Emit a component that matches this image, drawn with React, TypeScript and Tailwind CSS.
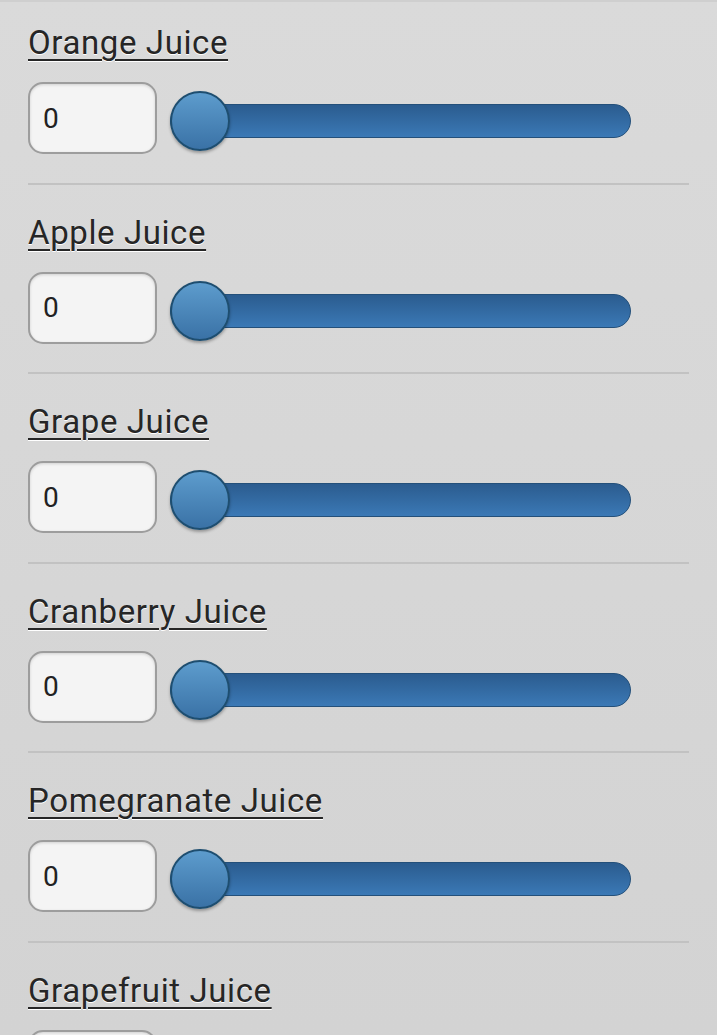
import { useState } from 'react';

const juices = [
  'Orange Juice',
  'Apple Juice',
  'Grape Juice',
  'Cranberry Juice',
  'Pomegranate Juice',
  'Grapefruit Juice',
];

const JuiceSlider = ({ label }: { label: string }) => {
  const [value, setValue] = useState(0);

  return (
    <div className="pt-[29px] pb-[28.5px] border-b-2 border-[#c2c2c2] first:pt-[22px]">
      <label className="block text-[33px] leading-[38px] tracking-[0.6px] text-[#262626] underline underline-offset-[5px] decoration-[2px] [text-shadow:0_1px_0_#fff]">
        {label}
      </label>
      <div className="mt-[20px] flex items-center">
        <input
          type="text"
          value={value}
          onChange={(e) => setValue(Number(e.target.value) || 0)}
          className="w-[129px] h-[72px] rounded-[15px] border-2 border-[#9d9d9d] bg-[#f4f4f4] px-[13px] text-[28px] text-[#222] shadow-[inset_0_1px_3px_rgba(0,0,0,0.15)] outline-none"
        />
        <div className="relative ml-[13px] mt-[6px] w-[461px] h-[62px] flex items-center">
          <div className="w-full h-[34px] rounded-full border border-[#24507a] bg-gradient-to-b from-[#2b5c8f] to-[#3b79b6]" />
          <div className="absolute left-0 top-[1px] w-[60px] h-[60px] rounded-full border-2 border-[#1e4e70] bg-gradient-to-b from-[#5d9ccd] to-[#3a72a6] shadow-[0_2px_3px_rgba(0,0,0,0.3)]" />
        </div>
      </div>
    </div>
  );
};

export default function App() {
  return (
    <div className="h-[1035px] overflow-hidden border-t-2 border-[#cfcfcf] bg-gradient-to-b from-[#dadada] to-[#d3d3d3] px-[28px] font-['Roboto',sans-serif]">
      {juices.map((j) => (
        <JuiceSlider key={j} label={j} />
      ))}
    </div>
  );
}
